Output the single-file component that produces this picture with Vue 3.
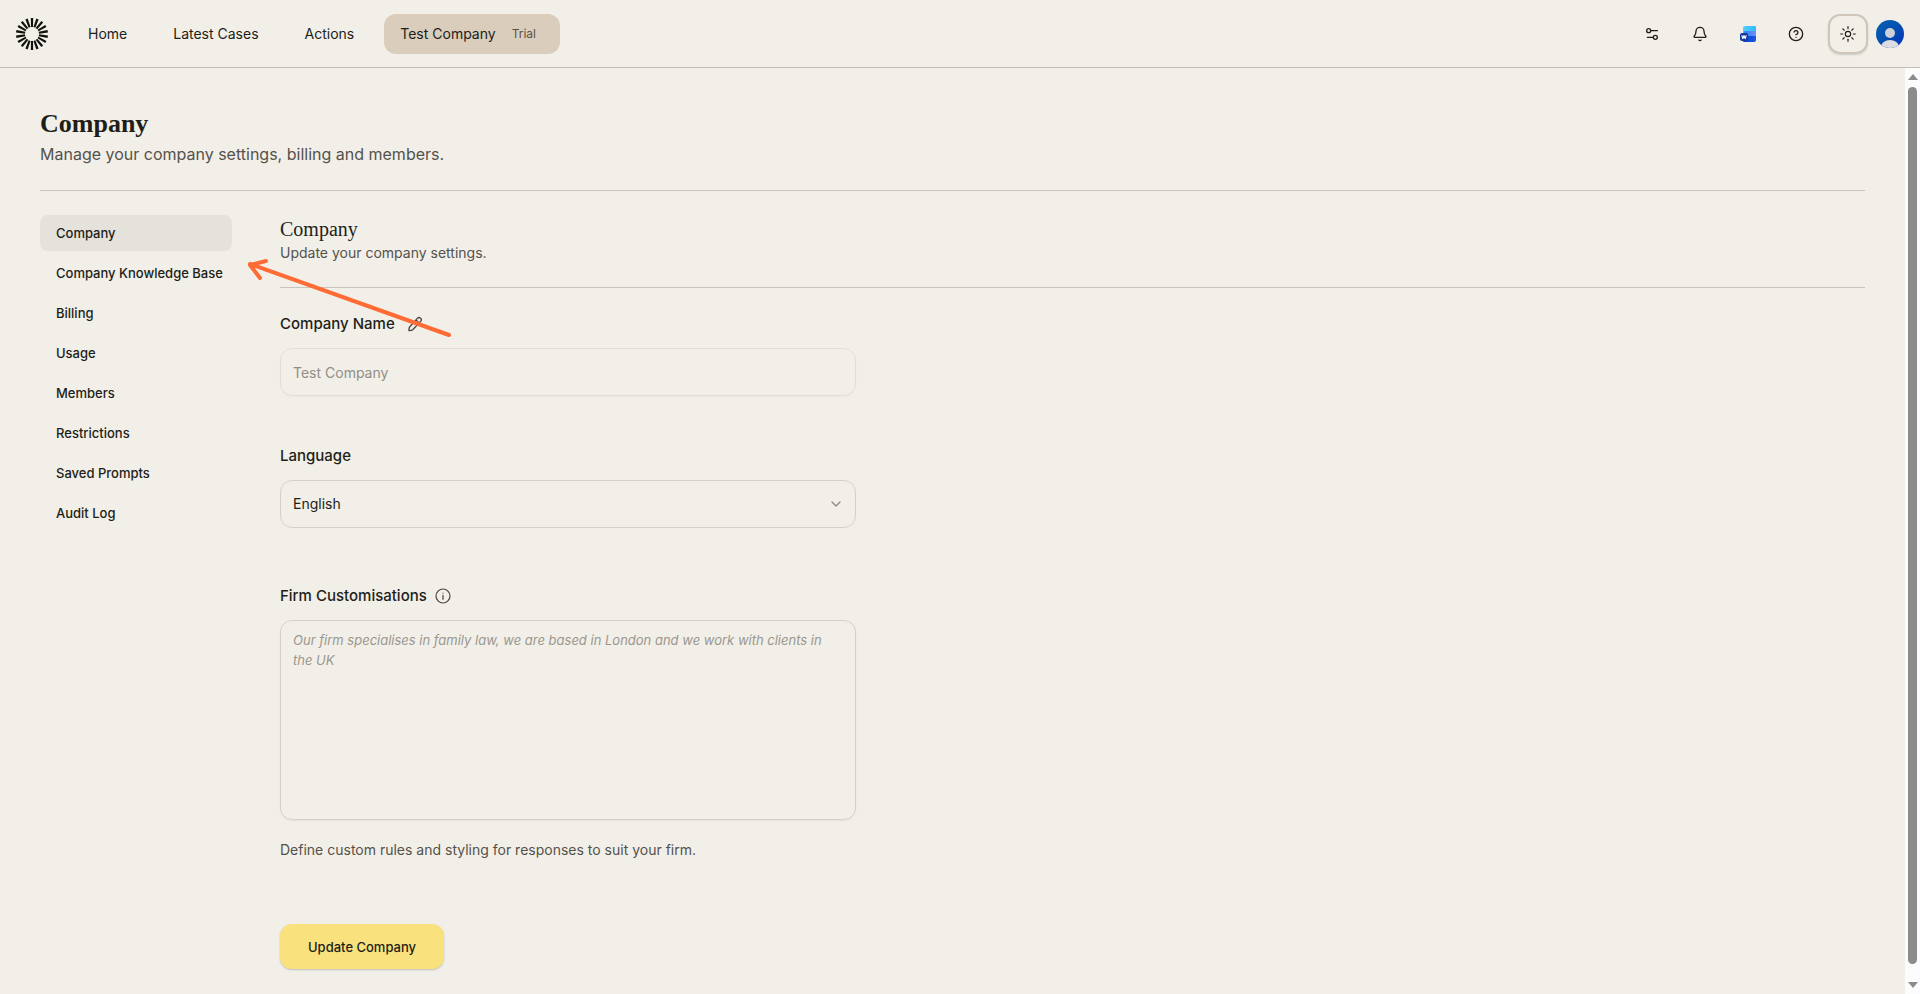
<script setup>
import { ref } from 'vue'

const navItems = ['Home', 'Latest Cases', 'Actions']
const sideItems = [
  'Company',
  'Company Knowledge Base',
  'Billing',
  'Usage',
  'Members',
  'Restrictions',
  'Saved Prompts',
  'Audit Log'
]
const rays = Array.from({ length: 18 }, (_, i) => i * 20)
const sunRays = Array.from({ length: 8 }, (_, i) => i * 45)
const companyName = ref('Test Company')
const language = ref('English')
const customisations = ref('')
</script>

<template>
  <div class="app">
    <header class="topbar">
      <a class="logo" href="#" aria-label="Dashboard">
        <svg viewBox="0 0 32 32" width="32" height="32" aria-hidden="true">
          <path
            v-for="angle in rays"
            :key="angle"
            d="M14.800 0h2.400l-.2 9h-2z"
            :transform="`rotate(${angle} 16 16)`"
          />
        </svg>
      </a>
      <nav class="topnav" aria-label="Main">
        <a v-for="item in navItems" :key="item" class="toplink" href="#">{{ item }}</a>
        <a class="toplink current" href="#">Test Company <span class="trial">Trial</span></a>
      </nav>
      <div class="tools">
        <button class="tool" type="button" aria-label="Preferences">
          <svg class="icon" viewBox="0 0 24 24" aria-hidden="true">
            <path d="M20 7h-9M14 17H5" />
            <circle cx="17" cy="17" r="3" />
            <circle cx="7" cy="7" r="3" />
          </svg>
        </button>
        <button class="tool" type="button" aria-label="Notifications">
          <svg class="icon" viewBox="0 0 24 24" aria-hidden="true">
            <path d="M10.268 21a2 2 0 0 0 3.464 0" />
            <path d="M3.262 15.326A1 1 0 0 0 4 17h16a1 1 0 0 0 .74-1.673C19.410 13.956 18 12.499 18 8A6 6 0 0 0 6 8c0 4.499-1.411 5.956-2.738 7.326" />
          </svg>
        </button>
        <button class="tool" type="button" aria-label="Word add-in">
          <svg viewBox="0 0 16 16" width="16" height="16" aria-hidden="true">
            <defs>
              <linearGradient id="wordTop" x1="0" x2="1">
                <stop offset="0" stop-color="#4fd0fb" />
                <stop offset="1" stop-color="#33b9f8" />
              </linearGradient>
              <linearGradient id="wordMid" x1="0" x2="1">
                <stop offset="0" stop-color="#2d7df2" />
                <stop offset="1" stop-color="#6f8ff8" />
              </linearGradient>
              <linearGradient id="wordLow" x1="0" x2="1">
                <stop offset="0" stop-color="#0a3fc4" />
                <stop offset="1" stop-color="#1858e8" />
              </linearGradient>
            </defs>
            <path d="M5 0h10a1 1 0 0 1 1 1v5H3V2a2 2 0 0 1 2-2z" fill="url(#wordTop)" />
            <path d="M3 8a3 3 0 0 1 3-3h10v6H3z" fill="url(#wordMid)" />
            <path d="M3 13a3 3 0 0 1 3-3h10v4a2 2 0 0 1-2 2H4a1 1 0 0 1-1-1z" fill="url(#wordLow)" />
            <rect x="0" y="7" width="8" height="8" rx="2" fill="#123a9c" />
            <path d="M1.800 9.300l1 3.300 1.200-3 1.200 3 1-3.300" fill="none" stroke="#fff" stroke-width="1.200" stroke-linejoin="round" />
          </svg>
        </button>
        <button class="tool" type="button" aria-label="Help">
          <svg class="icon" viewBox="0 0 24 24" aria-hidden="true">
            <circle cx="12" cy="12" r="10" />
            <path d="M9.090 9a3 3 0 0 1 5.830 1c0 2-3 3-3 3M12 17h.01" />
          </svg>
        </button>
        <button class="theme" type="button" aria-label="Light theme">
          <svg class="icon sun" viewBox="0 0 24 24" aria-hidden="true">
            <circle cx="12" cy="12" r="4" />
            <path v-for="angle in sunRays" :key="angle" d="M12 1v3" :transform="`rotate(${angle} 12 12)`" />
          </svg>
        </button>
        <button class="avatar" type="button" aria-label="Account">
          <svg viewBox="0 0 28 28" width="28" height="28" aria-hidden="true">
            <defs>
              <clipPath id="avatarClip"><circle cx="14" cy="14" r="14" /></clipPath>
              <linearGradient id="avatarFill" x1="0" y1="0" x2="1" y2="1">
                <stop offset="0" stop-color="#0663b4" />
                <stop offset=".5" stop-color="#044fae" />
                <stop offset="1" stop-color="#0631c4" />
              </linearGradient>
            </defs>
            <g clip-path="url(#avatarClip)">
              <rect width="28" height="28" fill="url(#avatarFill)" />
              <circle cx="14" cy="13" r="5" fill="#cfd1d8" />
              <ellipse cx="14" cy="27" rx="9" ry="7" fill="#dcdde2" />
            </g>
          </svg>
        </button>
      </div>
    </header>

    <div class="viewport">
      <main class="page">
        <h1>Company</h1>
        <p class="lead">Manage your company settings, billing and members.</p>
        <hr />
        <div class="columns">
          <nav class="sidenav" aria-label="Company settings">
            <a
              v-for="(item, i) in sideItems"
              :key="item"
              href="#"
              class="sidelink"
              :class="{ selected: i === 0 }"
            >{{ item }}</a>
          </nav>
          <section class="panel">
            <h2>Company</h2>
            <p class="sub">Update your company settings.</p>
            <hr />
            <form class="form" @submit.prevent>
              <div class="field">
                <div class="labelrow wide">
                  <label for="company-name">Company Name</label>
                  <button class="mini" type="button" aria-label="Edit company name">
                    <svg class="icon" viewBox="0 0 24 24" aria-hidden="true">
                      <path d="M15.500 3.500a3.300 3.300 0 0 1 5 4.600L9 20.200c-1.500 1.500-3.800 1.800-6 1.800-.3-2.500 0-4.600 1.500-6.200zM13.500 5.800l4.800 4.600" />
                    </svg>
                  </button>
                </div>
                <input id="company-name" v-model="companyName" class="control" type="text" disabled />
              </div>
              <div class="field">
                <div class="labelrow"><label for="language">Language</label></div>
                <div class="selectwrap">
                  <select id="language" v-model="language" class="control">
                    <option>English</option>
                  </select>
                  <svg class="icon chevron" viewBox="0 0 24 24" aria-hidden="true"><path d="m6 9 6 6 6-6" /></svg>
                </div>
              </div>
              <div class="field last">
                <div class="labelrow">
                  <label for="custom">Firm Customisations</label>
                  <button class="mini" type="button" aria-label="About firm customisations">
                    <svg class="icon info" viewBox="0 0 24 24" aria-hidden="true">
                      <circle cx="12" cy="12" r="10.500" />
                      <path d="M12 11v6M12 7.500v.1" />
                    </svg>
                  </button>
                </div>
                <textarea
                  id="custom"
                  v-model="customisations"
                  class="control area"
                  placeholder="Our firm specialises in family law, we are based in London and we work with clients in the UK"
                ></textarea>
                <p class="hint">Define custom rules and styling for responses to suit your firm.</p>
              </div>
              <button class="submit" type="submit">Update Company</button>
            </form>
          </section>
        </div>
        <svg class="pointer" viewBox="0 0 208 84" width="208" height="84" aria-hidden="true">
          <path d="M203 79 4 8M20 5 4 9l10 13" />
        </svg>
      </main>
      <div class="scrollbar" aria-hidden="true">
        <svg viewBox="0 0 10 6" width="10" height="6"><path d="M0 6 5 0l5 6z" /></svg>
        <div class="thumb"></div>
        <svg viewBox="0 0 10 6" width="10" height="6"><path d="M0 0h10L5 6z" /></svg>
      </div>
    </div>
  </div>
</template>

<style>
body {
  margin: 0;
  background: #f2efe8;
}
</style>

<style scoped>
* {
  box-sizing: border-box;
}
.app {
  display: flex;
  flex-direction: column;
  height: 100vh;
  background: #f2efe8;
  color: #211e18;
  font-family: Inter, "Liberation Sans", sans-serif;
  font-size: 14px;
  line-height: 20px;
}
button,
input,
select,
textarea {
  font: inherit;
  color: inherit;
}
button {
  padding: 0;
  border: 0;
  background: none;
  cursor: pointer;
}
a {
  color: inherit;
  text-decoration: none;
}
h1,
h2,
p {
  margin: 0;
}
.topbar {
  display: flex;
  flex: none;
  align-items: center;
  padding: 14px 16px 13px;
  border-bottom: 1px solid #c4c0b7;
}
.logo,
.logo svg {
  display: block;
}
.logo {
  margin-right: 24px;
  fill: #12110e;
}
.topnav {
  display: flex;
  gap: 14px;
}
.toplink {
  display: flex;
  align-items: center;
  height: 40px;
  padding: 0 16px;
  border-radius: 12px;
}
.current {
  background: #dacdbb;
}
.trial {
  padding: 0 8px 0 16px;
  color: #5a5248;
  font-size: 12px;
}
.tools {
  display: flex;
  align-items: center;
  margin-left: auto;
}
.tool {
  display: grid;
  place-items: center;
  width: 48px;
  height: 40px;
}
.icon {
  display: block;
  width: 16px;
  height: 16px;
  fill: none;
  stroke: currentColor;
  stroke-width: 2;
  stroke-linecap: round;
  stroke-linejoin: round;
}
.sun {
  stroke-width: 1.7;
}
.theme {
  display: grid;
  place-items: center;
  width: 40px;
  height: 40px;
  margin: 0 8px;
  border: 2px solid #cfc5b9;
  border-radius: 12px;
  box-shadow: 0 1px 2px rgb(0 0 0 / 15%);
}
.avatar,
.avatar svg {
  display: block;
}
.viewport {
  display: flex;
  flex: 1;
  min-height: 0;
}
.page {
  position: relative;
  flex: 1;
  padding: 40px 40px 0;
  overflow: hidden;
}
h1 {
  font: bold 26px/32px "Liberation Serif", serif;
}
.lead {
  margin-top: 2px;
  color: #55524c;
  font-size: 16px;
  line-height: 24px;
}
hr {
  height: 1px;
  margin: 24px 0;
  border: 0;
  background: #c8c4bb;
}
.columns {
  display: flex;
  gap: 48px;
}
.sidenav {
  display: flex;
  flex: none;
  flex-direction: column;
  gap: 4px;
  width: 192px;
}
.sidelink {
  padding: 8px 16px;
  border-radius: 8px;
  font-size: 13px;
  font-weight: 500;
  white-space: nowrap;
}
.selected {
  background: #e5e2db;
}
.panel {
  flex: 1;
}
h2 {
  font: 20px/28px "Liberation Serif", serif;
}
.sub {
  color: #55524c;
}
.form {
  max-width: 576px;
}
.field {
  margin-bottom: 48px;
}
.field + .field.last {
  margin-top: 56px;
  margin-bottom: 64px;
}
.labelrow {
  display: flex;
  align-items: center;
  gap: 8px;
  margin-bottom: 12px;
  font-size: 15px;
  font-weight: 500;
  line-height: 24px;
}
.wide {
  gap: 12px;
}
.mini {
  color: #4a4740;
}
.info {
  stroke-width: 1.8;
}
.control {
  display: block;
  width: 100%;
  height: 48px;
  padding: 0 12px;
  border: 1px solid #d5d1c8;
  border-radius: 12px;
  outline: 0;
  background: transparent;
  appearance: none;
}
.control:disabled {
  border-color: #e2dfd7;
  color: #918e87;
  box-shadow: 0 1px 2px rgb(0 0 0 / 3%);
}
.selectwrap {
  display: grid;
  align-items: center;
}
.selectwrap > * {
  grid-area: 1 / 1;
}
.chevron {
  justify-self: end;
  margin-right: 12px;
  color: #8c8983;
  pointer-events: none;
}
.area {
  height: 200px;
  padding: 9px 12px;
  font-size: 13px;
  resize: none;
  box-shadow: 0 1px 2px rgb(0 0 0 / 5%);
}
.area::placeholder {
  color: #9a978f;
  font-style: italic;
}
.hint {
  margin-top: 20px;
  color: #55524c;
}
.submit {
  height: 45px;
  padding: 0 28px;
  border-radius: 12px;
  background: #f9e27d;
  box-shadow: 0 1px 2px rgb(0 0 0 / 20%);
  font-size: 13px;
  font-weight: 500;
}
.pointer {
  position: absolute;
  top: 188px;
  left: 246px;
  fill: none;
  stroke: #ff6b35;
  stroke-width: 4;
  stroke-linecap: round;
  stroke-linejoin: round;
  pointer-events: none;
}
.scrollbar {
  display: flex;
  flex-direction: column;
  align-items: center;
  gap: 7px;
  width: 15px;
  padding: 6px 0;
  background: #fcfcfc;
  fill: #8b8b8b;
}
.scrollbar svg {
  flex: none;
}
.thumb {
  flex: 1;
  width: 9px;
  margin-bottom: 11px;
  border-radius: 5px;
  background: #8b8b8b;
}
</style>
